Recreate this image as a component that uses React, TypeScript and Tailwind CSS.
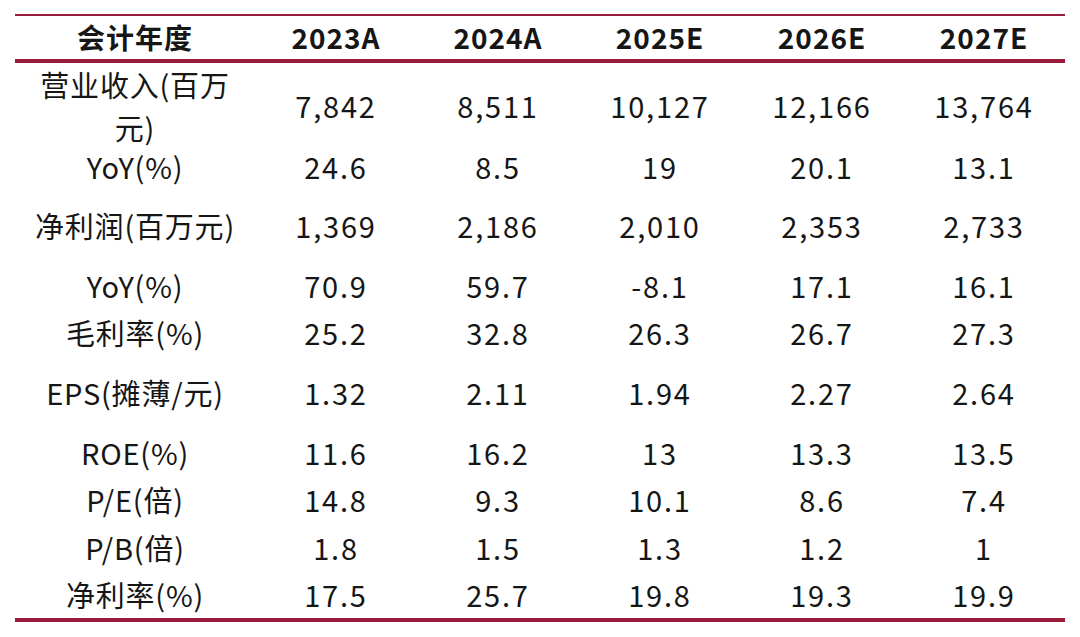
const cols = ['2023A', '2024A', '2025E', '2026E', '2027E'];

const rows: { label: string; h: string; values: string[] }[] = [
  { label: '营业收入(百万元)', h: 'h-[82px]', values: ['7,842', '8,511', '10,127', '12,166', '13,764'] },
  { label: 'YoY(%)', h: 'h-[46px]', values: ['24.6', '8.5', '19', '20.1', '13.1'] },
  { label: '净利润(百万元)', h: 'h-[72px]', values: ['1,369', '2,186', '2,010', '2,353', '2,733'] },
  { label: 'YoY(%)', h: 'h-[48px]', values: ['70.9', '59.7', '-8.1', '17.1', '16.1'] },
  { label: '毛利率(%)', h: 'h-[46px]', values: ['25.2', '32.8', '26.3', '26.7', '27.3'] },
  { label: 'EPS(摊薄/元)', h: 'h-[74px]', values: ['1.32', '2.11', '1.94', '2.27', '2.64'] },
  { label: 'ROE(%)', h: 'h-[46px]', values: ['11.6', '16.2', '13', '13.3', '13.5'] },
  { label: 'P/E(倍)', h: 'h-[48px]', values: ['14.8', '9.3', '10.1', '8.6', '7.4'] },
  { label: 'P/B(倍)', h: 'h-[48px]', values: ['1.8', '1.5', '1.3', '1.2', '1'] },
  { label: '净利率(%)', h: 'h-[45px]', values: ['17.5', '25.7', '19.8', '19.3', '19.9'] },
];

export default function App() {
  return (
    <div className="w-[1080px] h-[637px] bg-white pt-[14px] pl-[15px] text-[#161616] font-['Noto_Sans_CJK_SC','Noto_Sans',sans-serif]">
      <div className="w-[1050px] border-t-2 border-b-4 border-[#9b1b3d]">
        {/* header */}
        <div className="grid grid-cols-[240px_repeat(5,162px)] h-[47px] pb-[2px] border-b-4 border-[#9b1b3d] items-center text-[28px] font-bold">
          <div className="text-center tracking-[1px]">会计年度</div>
          {cols.map((c) => (
            <div key={c} className="text-center tracking-[1px]">{c}</div>
          ))}
        </div>

        {rows.map((r, i) => (
          <div key={i} className={`grid grid-cols-[240px_repeat(5,162px)] items-center pb-[3px] text-[29px] ${r.h}`}>
            <div className="px-[12px] text-center leading-[43px] tracking-[0.8px]">{r.label}</div>
            {r.values.map((v, j) => (
              <div key={j} className="text-center tracking-[1.8px]">{v}</div>
            ))}
          </div>
        ))}
      </div>
    </div>
  );
}
